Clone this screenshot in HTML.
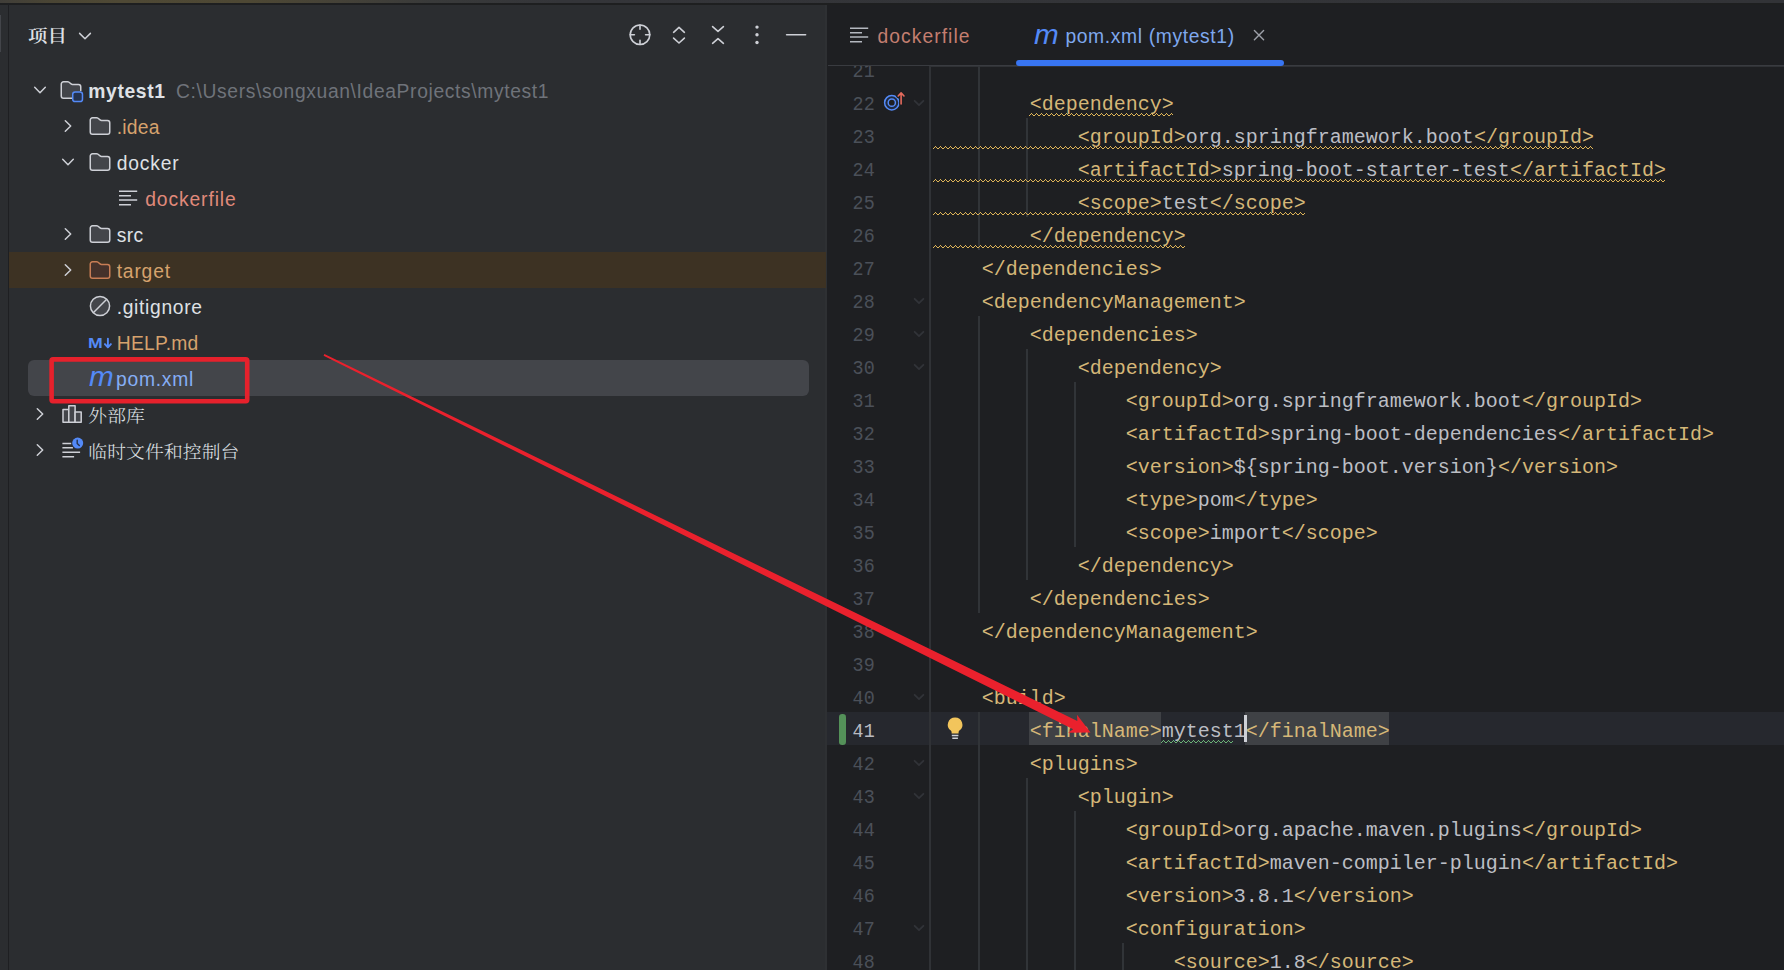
<!DOCTYPE html>
<html lang="zh-CN">
<head>
<meta charset="utf-8">
<title>mytest1 - pom.xml</title>
<style>
html,body{margin:0;padding:0;}
body{width:1784px;height:970px;overflow:hidden;background:#2B2D30;position:relative;font-family:'Liberation Sans', 'Noto Sans CJK SC', sans-serif;}
.abs{position:absolute;}
.t{position:absolute;white-space:pre;font-family:'Liberation Sans', 'Noto Sans CJK SC', sans-serif;font-size:19.3px;line-height:36px;height:36px;color:#DFE1E5;}
.cj{position:absolute;white-space:pre;font-family:'Liberation Serif', 'Noto Serif CJK SC', serif;font-size:18.8px;font-weight:300;letter-spacing:0.12px;line-height:36px;height:36px;color:#DFE1E5;transform:scaleY(0.9);transform-origin:0 26px;}
.ic{position:absolute;overflow:visible;}
#editor{position:absolute;left:827px;top:3px;width:957px;height:967px;background:#1E1F22;}
.ln{position:absolute;left:0;width:874.7px;text-align:right;font-family:'Liberation Mono', 'Noto Sans CJK SC', monospace;font-size:20px;line-height:33px;height:33px;color:#4B5059;white-space:pre;transform:scaleX(0.92);transform-origin:100% 50%;}
.cl{position:absolute;left:933px;font-family:'Liberation Mono', 'Noto Sans CJK SC', monospace;font-size:20px;line-height:33px;height:33px;color:#BCBEC4;white-space:pre;}
.cl b{font-weight:normal;color:#D5B778;}
.g{position:absolute;width:1.5px;background:#313438;}
.wv{position:absolute;height:4px;overflow:hidden;}
</style>
</head>
<body>
<div id="editor"></div>
<div class="abs" style="left:825px;top:4.6px;width:2px;height:966px;background:#2E3033"></div>
<div class="abs" style="left:0;top:0;width:1784px;height:3px;background:linear-gradient(90deg,#403e39 0px,#4a4534 50px,#4f4935 120px,#4e4834 250px,#454238 340px,#393a3a 430px,#343539 560px,#323337 1784px)"></div>
<div class="abs" style="left:0;top:3px;width:1784px;height:1.6px;background:#1E1F20"></div>
<div class="abs" style="left:8.2px;top:3px;width:1px;height:967px;background:#1E1F22"></div>
<div class="abs" style="left:0;top:15px;width:1.3px;height:37px;background:#43454A"></div>
<div class="cj" style="left:28px;top:17.5px;font-size:19.5px;font-weight:600">项目</div>
<svg class="ic" style="left:73px;top:24px" width="24" height="24" viewBox="0 0 24 24"><polyline points="6.6,9.4 12,14.8 17.4,9.4" fill="none" stroke="#CED0D6" stroke-width="1.5" stroke-linecap="round" stroke-linejoin="round"/></svg>
<svg class="ic" style="left:0;top:0" width="827" height="70" viewBox="0 0 827 70" fill="none" stroke="#CED0D6" stroke-width="1.6" stroke-linecap="round" stroke-linejoin="round"><circle cx="640" cy="34.75" r="9.8"/><path d="M640 24.95V29.15M640 44.55V40.35M630.2 34.75H634.4M649.8 34.75H645.6"/><polyline points="673.6,32.3 679,27.4 684.4,32.3"/><polyline points="673.6,38.1 679,43.0 684.4,38.1"/><polyline points="712.6,26.6 718,31.4 723.4,26.6"/><polyline points="712.6,43.3 718,38.6 723.4,43.3"/><path d="M786.6 34.75H805.6"/><g fill="#CED0D6" stroke="none"><circle cx="757" cy="27.1" r="1.7"/><circle cx="757" cy="34.8" r="1.7"/><circle cx="757" cy="42.5" r="1.7"/></g></svg>
<div class="abs" style="left:9px;top:252px;width:817px;height:36px;background:#3D3223"></div>
<div class="abs" style="left:27.5px;top:360px;width:781.5px;height:36px;background:#43454A;border-radius:6px"></div>
<svg class="ic" style="left:28.0px;top:78.3px" width="24" height="24" viewBox="0 0 24 24"><polyline points="6.7,9.3 12,14.7 17.3,9.3" fill="none" stroke="#CED0D6" stroke-width="1.5" stroke-linecap="round" stroke-linejoin="round"/></svg>
<svg class="ic" style="left:58.699999999999996px;top:77.8px" width="27" height="27" viewBox="0 0 18 18"><path d="M9.5 13.5H3A1.5 1.5 0 0 1 1.5 12V4A1.5 1.5 0 0 1 3 2.5H5.75A1.5 1.5 0 0 1 6.7 2.84L8.05 3.94A1.5 1.5 0 0 0 9 4.28H13A1.5 1.5 0 0 1 14.5 5.78V9Z" fill="#43454A" stroke="none"/><path d="M8.6 13.5H3A1.5 1.5 0 0 1 1.5 12V4A1.5 1.5 0 0 1 3 2.5H5.75A1.5 1.5 0 0 1 6.7 2.84L8.05 3.94A1.5 1.5 0 0 0 9 4.28H13A1.5 1.5 0 0 1 14.5 5.78V8.3" fill="none" stroke="#CED0D6" stroke-width="1" stroke-linecap="round"/><rect x="9.15" y="9.3" width="6.5" height="6.4" rx="1.6" fill="#25324D" stroke="#548AF7" stroke-width="1"/></svg>
<div class="t" style="left:88.2px;top:74.2px;letter-spacing:0.662px;color:#DFE1E5;font-weight:bold;">mytest1</div>
<div class="t" style="left:176px;top:74.2px;letter-spacing:0.626px;color:#6F737A;">C:\Users\songxuan\IdeaProjects\mytest1</div>
<svg class="ic" style="left:55.5px;top:114.3px" width="24" height="24" viewBox="0 0 24 24"><polyline points="9.3,6.7 14.7,12 9.3,17.3" fill="none" stroke="#CED0D6" stroke-width="1.5" stroke-linecap="round" stroke-linejoin="round"/></svg>
<svg class="ic" style="left:87.8px;top:114px" width="24" height="24" viewBox="0 0 16 16"><path d="M1.5 4A1.5 1.5 0 0 1 3 2.5H5.75A1.5 1.5 0 0 1 6.7 2.84L8.05 3.94A1.5 1.5 0 0 0 9 4.28H13A1.5 1.5 0 0 1 14.5 5.78V12A1.5 1.5 0 0 1 13 13.5H3A1.5 1.5 0 0 1 1.5 12Z" fill="#43454A" stroke="#CED0D6" stroke-width="1"/></svg>
<div class="t" style="left:116.7px;top:110.2px;letter-spacing:0.228px;color:#D6A26D;">.idea</div>
<svg class="ic" style="left:55.900000000000006px;top:150.3px" width="24" height="24" viewBox="0 0 24 24"><polyline points="6.7,9.3 12,14.7 17.3,9.3" fill="none" stroke="#CED0D6" stroke-width="1.5" stroke-linecap="round" stroke-linejoin="round"/></svg>
<svg class="ic" style="left:87.8px;top:150px" width="24" height="24" viewBox="0 0 16 16"><path d="M1.5 4A1.5 1.5 0 0 1 3 2.5H5.75A1.5 1.5 0 0 1 6.7 2.84L8.05 3.94A1.5 1.5 0 0 0 9 4.28H13A1.5 1.5 0 0 1 14.5 5.78V12A1.5 1.5 0 0 1 13 13.5H3A1.5 1.5 0 0 1 1.5 12Z" fill="#43454A" stroke="#CED0D6" stroke-width="1"/></svg>
<div class="t" style="left:116.7px;top:146.2px;letter-spacing:0.845px;color:#DFE1E5;">docker</div>
<svg class="ic" style="left:116.0px;top:186.1px" width="24" height="24" viewBox="0 0 24 24" fill="none" stroke="#CED0D6" stroke-width="1.5" stroke-linecap="butt"><path d="M3 5.2H21.2M3 9.7H15M3 14.1H21.2M3 18.7H15"/></svg>
<div class="t" style="left:145.2px;top:182.2px;letter-spacing:0.889px;color:#E08A7B;">dockerfile</div>
<svg class="ic" style="left:55.5px;top:222.3px" width="24" height="24" viewBox="0 0 24 24"><polyline points="9.3,6.7 14.7,12 9.3,17.3" fill="none" stroke="#CED0D6" stroke-width="1.5" stroke-linecap="round" stroke-linejoin="round"/></svg>
<svg class="ic" style="left:87.8px;top:222px" width="24" height="24" viewBox="0 0 16 16"><path d="M1.5 4A1.5 1.5 0 0 1 3 2.5H5.75A1.5 1.5 0 0 1 6.7 2.84L8.05 3.94A1.5 1.5 0 0 0 9 4.28H13A1.5 1.5 0 0 1 14.5 5.78V12A1.5 1.5 0 0 1 13 13.5H3A1.5 1.5 0 0 1 1.5 12Z" fill="#43454A" stroke="#CED0D6" stroke-width="1"/></svg>
<div class="t" style="left:116.7px;top:218.2px;letter-spacing:0.354px;color:#DFE1E5;">src</div>
<svg class="ic" style="left:55.5px;top:258.3px" width="24" height="24" viewBox="0 0 24 24"><polyline points="9.3,6.7 14.7,12 9.3,17.3" fill="none" stroke="#CED0D6" stroke-width="1.5" stroke-linecap="round" stroke-linejoin="round"/></svg>
<svg class="ic" style="left:87.8px;top:258px" width="24" height="24" viewBox="0 0 16 16"><path d="M1.5 4A1.5 1.5 0 0 1 3 2.5H5.75A1.5 1.5 0 0 1 6.7 2.84L8.05 3.94A1.5 1.5 0 0 0 9 4.28H13A1.5 1.5 0 0 1 14.5 5.78V12A1.5 1.5 0 0 1 13 13.5H3A1.5 1.5 0 0 1 1.5 12Z" fill="#45322B" stroke="#C77D55" stroke-width="1"/></svg>
<div class="t" style="left:116.7px;top:254.2px;letter-spacing:0.805px;color:#D6A26D;">target</div>
<svg class="ic" style="left:87.8px;top:294px" width="24" height="24" viewBox="0 0 24 24"><circle cx="12" cy="12" r="9.6" fill="#43454A" stroke="#CED0D6" stroke-width="1.5"/><path d="M5.3 18.7L18.7 5.3" stroke="#CED0D6" stroke-width="1.5"/></svg>
<div class="t" style="left:116.7px;top:290.2px;letter-spacing:0.660px;color:#DFE1E5;">.gitignore</div>
<div class="abs" style="left:88.2px;top:330.5px;width:16px;height:24px;line-height:24px;font-family:'Liberation Sans', 'Noto Sans CJK SC', sans-serif;font-weight:bold;font-size:14.5px;color:#548AF7;transform:scaleX(1.22);transform-origin:0 50%">M</div>
<svg class="ic" style="left:100px;top:330px" width="14" height="24" viewBox="0 0 14 24" fill="none" stroke="#548AF7" stroke-width="1.9" stroke-linecap="round" stroke-linejoin="round"><path d="M7.9 8.6V17.2M4.9 14.1L7.9 17.4L10.9 14.1"/></svg>
<div class="t" style="left:116.7px;top:326.2px;letter-spacing:0.269px;color:#D6A26D;">HELP.md</div>
<div class="abs" style="left:88.7px;top:359.1px;width:28px;height:36px;line-height:36px;font-family:'Liberation Sans', 'Noto Sans CJK SC', sans-serif;font-style:italic;font-size:27px;color:#548AF7;transform:scaleX(1.1);transform-origin:0 50%">m</div>
<div class="t" style="left:116.0px;top:362.2px;letter-spacing:0.724px;color:#86AEF5;">pom.xml</div>
<svg class="ic" style="left:0;top:340px" width="300" height="80" viewBox="0 340 300 80"><rect x="51.6" y="359.4" width="195.6" height="41.8" rx="1.4" fill="none" stroke="#E6212C" stroke-width="4.6"/></svg>
<svg class="ic" style="left:27.799999999999997px;top:402.3px" width="24" height="24" viewBox="0 0 24 24"><polyline points="9.3,6.7 14.7,12 9.3,17.3" fill="none" stroke="#CED0D6" stroke-width="1.5" stroke-linecap="round" stroke-linejoin="round"/></svg>
<svg class="ic" style="left:59.599999999999994px;top:402px" width="24" height="24" viewBox="0 0 24 24" fill="#43454A" stroke="#CED0D6" stroke-width="1.5" stroke-linejoin="round"><path d="M3.0 7.4H8.8V20.3H3.0Z"/><path d="M8.8 3.7H15.1V20.3H8.8Z"/><path d="M15.1 10.1H21.2V20.3H15.1Z"/></svg>
<div class="cj" style="left:88.3px;top:398.1px">外部库</div>
<svg class="ic" style="left:27.799999999999997px;top:438.3px" width="24" height="24" viewBox="0 0 24 24"><polyline points="9.3,6.7 14.7,12 9.3,17.3" fill="none" stroke="#CED0D6" stroke-width="1.5" stroke-linecap="round" stroke-linejoin="round"/></svg>
<svg class="ic" style="left:59.599999999999994px;top:438px" width="24" height="24" viewBox="0 0 24 24" fill="none"><path d="M2.4 5.4H11.2M2.4 9.8H12.9M2.4 14.2H20.1M2.4 18.8H14.1" stroke="#CED0D6" stroke-width="1.5"/><circle cx="17.7" cy="5.1" r="5.5" fill="#548AF7"/><path d="M17.2 2.1V5.5L19.3 7.6" stroke="#25324D" stroke-width="1.4" stroke-linecap="round" stroke-linejoin="round"/></svg>
<div class="cj" style="left:88.3px;top:434.3px">临时文件和控制台</div>
<svg class="ic" style="left:847.2px;top:23.299999999999997px" width="24" height="24" viewBox="0 0 24 24" fill="none" stroke="#B4B8BF" stroke-width="1.5" stroke-linecap="butt"><path d="M3 5.2H21.2M3 9.7H15M3 14.1H21.2M3 18.7H15"/></svg>
<div class="t" style="left:877.6px;top:19.0px;letter-spacing:1.039px;color:#C47E70">dockerfile</div>
<div class="abs" style="left:1034.1px;top:16.700000000000003px;width:28px;height:36px;line-height:36px;font-family:'Liberation Sans', 'Noto Sans CJK SC', sans-serif;font-style:italic;font-size:27px;color:#548AF7;transform:scaleX(1.1);transform-origin:0 50%">m</div>
<div class="t" style="left:1065.4px;top:19.0px;letter-spacing:0.634px;color:#7FA8EE">pom.xml (mytest1)</div>
<svg class="ic" style="left:1247px;top:23px" width="24" height="24" viewBox="0 0 24 24"><path d="M7.4 7.6L16.6 16.8M16.6 7.6L7.4 16.8" stroke="#9DA0A8" stroke-width="1.4" stroke-linecap="round"/></svg>
<div class="abs" style="left:828px;top:65px;width:956px;height:1.1px;background:#393B40"></div>
<div class="abs" style="left:931px;top:66px;width:853px;height:1px;background:#303236"></div>
<div class="abs" style="left:1016px;top:60px;width:268.3px;height:6px;border-radius:3px;background:#3875F2"></div>
<div class="abs" style="left:827px;top:65.9px;width:957px;height:904.1px;overflow:hidden">
<div class="abs" style="left:-827px;top:-65.9px;width:1784px;height:970px">
<div class="abs" style="left:827px;top:711.5px;width:957px;height:33px;background:#26282E"></div>
<div class="g" style="left:928.7px;top:60px;height:910px;width:1.9px;background:#303236"></div>
<div class="g" style="left:978.1px;top:51.7px;height:198.0px"></div>
<div class="g" style="left:1026.1px;top:117.7px;height:99.0px"></div>
<div class="g" style="left:978.1px;top:315.7px;height:297.0px"></div>
<div class="g" style="left:1026.1px;top:348.7px;height:231.0px"></div>
<div class="g" style="left:1074.1px;top:381.7px;height:165.0px"></div>
<div class="g" style="left:978.1px;top:711.7px;height:264.0px"></div>
<div class="g" style="left:1026.1px;top:777.7px;height:198.0px"></div>
<div class="g" style="left:1074.1px;top:810.7px;height:165.0px"></div>
<div class="g" style="left:1122.1px;top:942.7px;height:33.0px"></div>
<div class="abs" style="left:1029px;top:711.5px;width:132px;height:33px;background:#3F4145"></div>
<div class="abs" style="left:1245px;top:711.5px;width:144px;height:33px;background:#3F4145"></div>
<div class="abs" style="left:839.3px;top:713.9000000000001px;width:6.4px;height:31.2px;border-radius:3.2px;background:#549159"></div>
<div class="ln" style="top:54.8px;color:#4B5059">21</div>
<div class="ln" style="top:87.8px;color:#4B5059">22</div>
<div class="cl" style="top:88.0px;left:1029.8px"><b>&lt;dependency&gt;</b></div>
<div class="ln" style="top:120.8px;color:#4B5059">23</div>
<div class="cl" style="top:121.0px;left:1077.8px"><b>&lt;groupId&gt;</b>org.springframework.boot<b>&lt;/groupId&gt;</b></div>
<div class="ln" style="top:153.8px;color:#4B5059">24</div>
<div class="cl" style="top:154.0px;left:1077.8px"><b>&lt;artifactId&gt;</b>spring-boot-starter-test<b>&lt;/artifactId&gt;</b></div>
<div class="ln" style="top:186.8px;color:#4B5059">25</div>
<div class="cl" style="top:187.0px;left:1077.8px"><b>&lt;scope&gt;</b>test<b>&lt;/scope&gt;</b></div>
<div class="ln" style="top:219.8px;color:#4B5059">26</div>
<div class="cl" style="top:220.0px;left:1029.8px"><b>&lt;/dependency&gt;</b></div>
<div class="ln" style="top:252.8px;color:#4B5059">27</div>
<div class="cl" style="top:253.0px;left:981.8px"><b>&lt;/dependencies&gt;</b></div>
<div class="ln" style="top:285.8px;color:#4B5059">28</div>
<div class="cl" style="top:286.0px;left:981.8px"><b>&lt;dependencyManagement&gt;</b></div>
<div class="ln" style="top:318.8px;color:#4B5059">29</div>
<div class="cl" style="top:319.0px;left:1029.8px"><b>&lt;dependencies&gt;</b></div>
<div class="ln" style="top:351.8px;color:#4B5059">30</div>
<div class="cl" style="top:352.0px;left:1077.8px"><b>&lt;dependency&gt;</b></div>
<div class="ln" style="top:384.8px;color:#4B5059">31</div>
<div class="cl" style="top:385.0px;left:1125.8px"><b>&lt;groupId&gt;</b>org.springframework.boot<b>&lt;/groupId&gt;</b></div>
<div class="ln" style="top:417.8px;color:#4B5059">32</div>
<div class="cl" style="top:418.0px;left:1125.8px"><b>&lt;artifactId&gt;</b>spring-boot-dependencies<b>&lt;/artifactId&gt;</b></div>
<div class="ln" style="top:450.8px;color:#4B5059">33</div>
<div class="cl" style="top:451.0px;left:1125.8px"><b>&lt;version&gt;</b>${spring-boot.version}<b>&lt;/version&gt;</b></div>
<div class="ln" style="top:483.8px;color:#4B5059">34</div>
<div class="cl" style="top:484.0px;left:1125.8px"><b>&lt;type&gt;</b>pom<b>&lt;/type&gt;</b></div>
<div class="ln" style="top:516.8px;color:#4B5059">35</div>
<div class="cl" style="top:517.0px;left:1125.8px"><b>&lt;scope&gt;</b>import<b>&lt;/scope&gt;</b></div>
<div class="ln" style="top:549.8px;color:#4B5059">36</div>
<div class="cl" style="top:550.0px;left:1077.8px"><b>&lt;/dependency&gt;</b></div>
<div class="ln" style="top:582.8px;color:#4B5059">37</div>
<div class="cl" style="top:583.0px;left:1029.8px"><b>&lt;/dependencies&gt;</b></div>
<div class="ln" style="top:615.8px;color:#4B5059">38</div>
<div class="cl" style="top:616.0px;left:981.8px"><b>&lt;/dependencyManagement&gt;</b></div>
<div class="ln" style="top:648.8px;color:#4B5059">39</div>
<div class="ln" style="top:681.8px;color:#4B5059">40</div>
<div class="cl" style="top:682.0px;left:981.8px"><b>&lt;build&gt;</b></div>
<div class="ln" style="top:714.8px;color:#B9BBC2">41</div>
<div class="cl" style="top:715.0px;left:1029.8px"><b>&lt;finalName&gt;</b>mytest1<b>&lt;/finalName&gt;</b></div>
<div class="ln" style="top:747.8px;color:#4B5059">42</div>
<div class="cl" style="top:748.0px;left:1029.8px"><b>&lt;plugins&gt;</b></div>
<div class="ln" style="top:780.8px;color:#4B5059">43</div>
<div class="cl" style="top:781.0px;left:1077.8px"><b>&lt;plugin&gt;</b></div>
<div class="ln" style="top:813.8px;color:#4B5059">44</div>
<div class="cl" style="top:814.0px;left:1125.8px"><b>&lt;groupId&gt;</b>org.apache.maven.plugins<b>&lt;/groupId&gt;</b></div>
<div class="ln" style="top:846.8px;color:#4B5059">45</div>
<div class="cl" style="top:847.0px;left:1125.8px"><b>&lt;artifactId&gt;</b>maven-compiler-plugin<b>&lt;/artifactId&gt;</b></div>
<div class="ln" style="top:879.8px;color:#4B5059">46</div>
<div class="cl" style="top:880.0px;left:1125.8px"><b>&lt;version&gt;</b>3.8.1<b>&lt;/version&gt;</b></div>
<div class="ln" style="top:912.8px;color:#4B5059">47</div>
<div class="cl" style="top:913.0px;left:1125.8px"><b>&lt;configuration&gt;</b></div>
<div class="ln" style="top:945.8px;color:#4B5059">48</div>
<div class="cl" style="top:946.0px;left:1173.8px"><b>&lt;source&gt;</b>1.8<b>&lt;/source&gt;</b></div>
<svg class="ic" style="left:1029px;top:113px" width="144" height="3" viewBox="0 0 144 3" shape-rendering="crispEdges"><defs><pattern id="wv1" width="5" height="3" patternUnits="userSpaceOnUse"><rect x="0" y="2" width="1" height="1" fill="#E0B558"/><rect x="1" y="1" width="1" height="1" fill="#E0B558"/><rect x="2" y="0" width="1" height="1" fill="#E0B558"/><rect x="3" y="1" width="1" height="1" fill="#E0B558"/><rect x="4" y="2" width="1" height="1" fill="#E0B558"/></pattern></defs><rect width="144" height="3" fill="url(#wv1)"/></svg>
<svg class="ic" style="left:933px;top:146px" width="660" height="3" viewBox="0 0 660 3" shape-rendering="crispEdges"><defs><pattern id="wv2" width="5" height="3" patternUnits="userSpaceOnUse"><rect x="0" y="2" width="1" height="1" fill="#E0B558"/><rect x="1" y="1" width="1" height="1" fill="#E0B558"/><rect x="2" y="0" width="1" height="1" fill="#E0B558"/><rect x="3" y="1" width="1" height="1" fill="#E0B558"/><rect x="4" y="2" width="1" height="1" fill="#E0B558"/></pattern></defs><rect width="660" height="3" fill="url(#wv2)"/></svg>
<svg class="ic" style="left:933px;top:179px" width="732" height="3" viewBox="0 0 732 3" shape-rendering="crispEdges"><defs><pattern id="wv3" width="5" height="3" patternUnits="userSpaceOnUse"><rect x="0" y="2" width="1" height="1" fill="#E0B558"/><rect x="1" y="1" width="1" height="1" fill="#E0B558"/><rect x="2" y="0" width="1" height="1" fill="#E0B558"/><rect x="3" y="1" width="1" height="1" fill="#E0B558"/><rect x="4" y="2" width="1" height="1" fill="#E0B558"/></pattern></defs><rect width="732" height="3" fill="url(#wv3)"/></svg>
<svg class="ic" style="left:933px;top:212px" width="372" height="3" viewBox="0 0 372 3" shape-rendering="crispEdges"><defs><pattern id="wv4" width="5" height="3" patternUnits="userSpaceOnUse"><rect x="0" y="2" width="1" height="1" fill="#E0B558"/><rect x="1" y="1" width="1" height="1" fill="#E0B558"/><rect x="2" y="0" width="1" height="1" fill="#E0B558"/><rect x="3" y="1" width="1" height="1" fill="#E0B558"/><rect x="4" y="2" width="1" height="1" fill="#E0B558"/></pattern></defs><rect width="372" height="3" fill="url(#wv4)"/></svg>
<svg class="ic" style="left:933px;top:245px" width="252" height="3" viewBox="0 0 252 3" shape-rendering="crispEdges"><defs><pattern id="wv5" width="5" height="3" patternUnits="userSpaceOnUse"><rect x="0" y="2" width="1" height="1" fill="#E0B558"/><rect x="1" y="1" width="1" height="1" fill="#E0B558"/><rect x="2" y="0" width="1" height="1" fill="#E0B558"/><rect x="3" y="1" width="1" height="1" fill="#E0B558"/><rect x="4" y="2" width="1" height="1" fill="#E0B558"/></pattern></defs><rect width="252" height="3" fill="url(#wv5)"/></svg>
<svg class="ic" style="left:1161px;top:740px" width="72" height="3" viewBox="0 0 72 3" shape-rendering="crispEdges"><defs><pattern id="wv6" width="5" height="3" patternUnits="userSpaceOnUse"><rect x="0" y="2" width="1" height="1" fill="#6BB377"/><rect x="1" y="1" width="1" height="1" fill="#6BB377"/><rect x="2" y="0" width="1" height="1" fill="#6BB377"/><rect x="3" y="1" width="1" height="1" fill="#6BB377"/><rect x="4" y="2" width="1" height="1" fill="#6BB377"/></pattern></defs><rect width="72" height="3" fill="url(#wv6)"/></svg>
<div class="abs" style="left:1244px;top:714.7px;width:3px;height:27.5px;background:#CED0D6"></div>
<svg class="ic" style="left:911.2px;top:95.3px" width="16" height="16" viewBox="0 0 16 16"><polyline points="3.6,5.8 8,10.2 12.4,5.8" fill="none" stroke="#313338" stroke-width="1.8" stroke-linecap="round" stroke-linejoin="round"/></svg>
<svg class="ic" style="left:911.2px;top:293.3px" width="16" height="16" viewBox="0 0 16 16"><polyline points="3.6,5.8 8,10.2 12.4,5.8" fill="none" stroke="#313338" stroke-width="1.8" stroke-linecap="round" stroke-linejoin="round"/></svg>
<svg class="ic" style="left:911.2px;top:326.3px" width="16" height="16" viewBox="0 0 16 16"><polyline points="3.6,5.8 8,10.2 12.4,5.8" fill="none" stroke="#313338" stroke-width="1.8" stroke-linecap="round" stroke-linejoin="round"/></svg>
<svg class="ic" style="left:911.2px;top:359.3px" width="16" height="16" viewBox="0 0 16 16"><polyline points="3.6,5.8 8,10.2 12.4,5.8" fill="none" stroke="#313338" stroke-width="1.8" stroke-linecap="round" stroke-linejoin="round"/></svg>
<svg class="ic" style="left:911.2px;top:689.3px" width="16" height="16" viewBox="0 0 16 16"><polyline points="3.6,5.8 8,10.2 12.4,5.8" fill="none" stroke="#313338" stroke-width="1.8" stroke-linecap="round" stroke-linejoin="round"/></svg>
<svg class="ic" style="left:911.2px;top:755.3px" width="16" height="16" viewBox="0 0 16 16"><polyline points="3.6,5.8 8,10.2 12.4,5.8" fill="none" stroke="#313338" stroke-width="1.8" stroke-linecap="round" stroke-linejoin="round"/></svg>
<svg class="ic" style="left:911.2px;top:788.3px" width="16" height="16" viewBox="0 0 16 16"><polyline points="3.6,5.8 8,10.2 12.4,5.8" fill="none" stroke="#313338" stroke-width="1.8" stroke-linecap="round" stroke-linejoin="round"/></svg>
<svg class="ic" style="left:911.2px;top:920.3px" width="16" height="16" viewBox="0 0 16 16"><polyline points="3.6,5.8 8,10.2 12.4,5.8" fill="none" stroke="#313338" stroke-width="1.8" stroke-linecap="round" stroke-linejoin="round"/></svg>
<svg class="ic" style="left:880px;top:88.7px" width="28" height="26" viewBox="0 0 28 26" fill="none"><circle cx="11.8" cy="13.7" r="7.2" stroke="#548AF7" stroke-width="1.5" fill="#1F2A40"/><circle cx="11.8" cy="13.7" r="3.6" stroke="#548AF7" stroke-width="1.5" fill="#1E1F22"/><path d="M21.1 15V4.2M18.2 7L21.1 3.9L24 7" stroke="#1E1F22" stroke-width="4" stroke-linecap="round" stroke-linejoin="round"/><path d="M21.1 15V4.2M18.2 7L21.1 3.9L24 7" stroke="#E46A5C" stroke-width="1.6" stroke-linecap="round" stroke-linejoin="round"/></svg>
<svg class="ic" style="left:943px;top:715.2px" width="24" height="27" viewBox="0 0 24 27"><path d="M12.1 2.4a7.3 7.3 0 0 0-4.3 13.2c.5.4.8 1 .8 1.6v1.2h7v-1.2c0-.6.3-1.2.8-1.6A7.3 7.3 0 0 0 12.1 2.4Z" fill="#F2C55C"/><path d="M8.8 20.5h6.6M9.3 23.3h5.6" stroke="#CED0D6" stroke-width="1.6" stroke-linecap="butt"/></svg>
</div>
</div>
<svg class="ic" style="left:0;top:0" width="1784" height="970" viewBox="0 0 1784 970"><polygon points="323.6,355.7 1073.2,729.2 1068.1,732.7 1090.5,732.6 1077.0,714.8 1077.3,721.0 324.4,353.9" fill="#EA212D"/></svg>
</body>
</html>
